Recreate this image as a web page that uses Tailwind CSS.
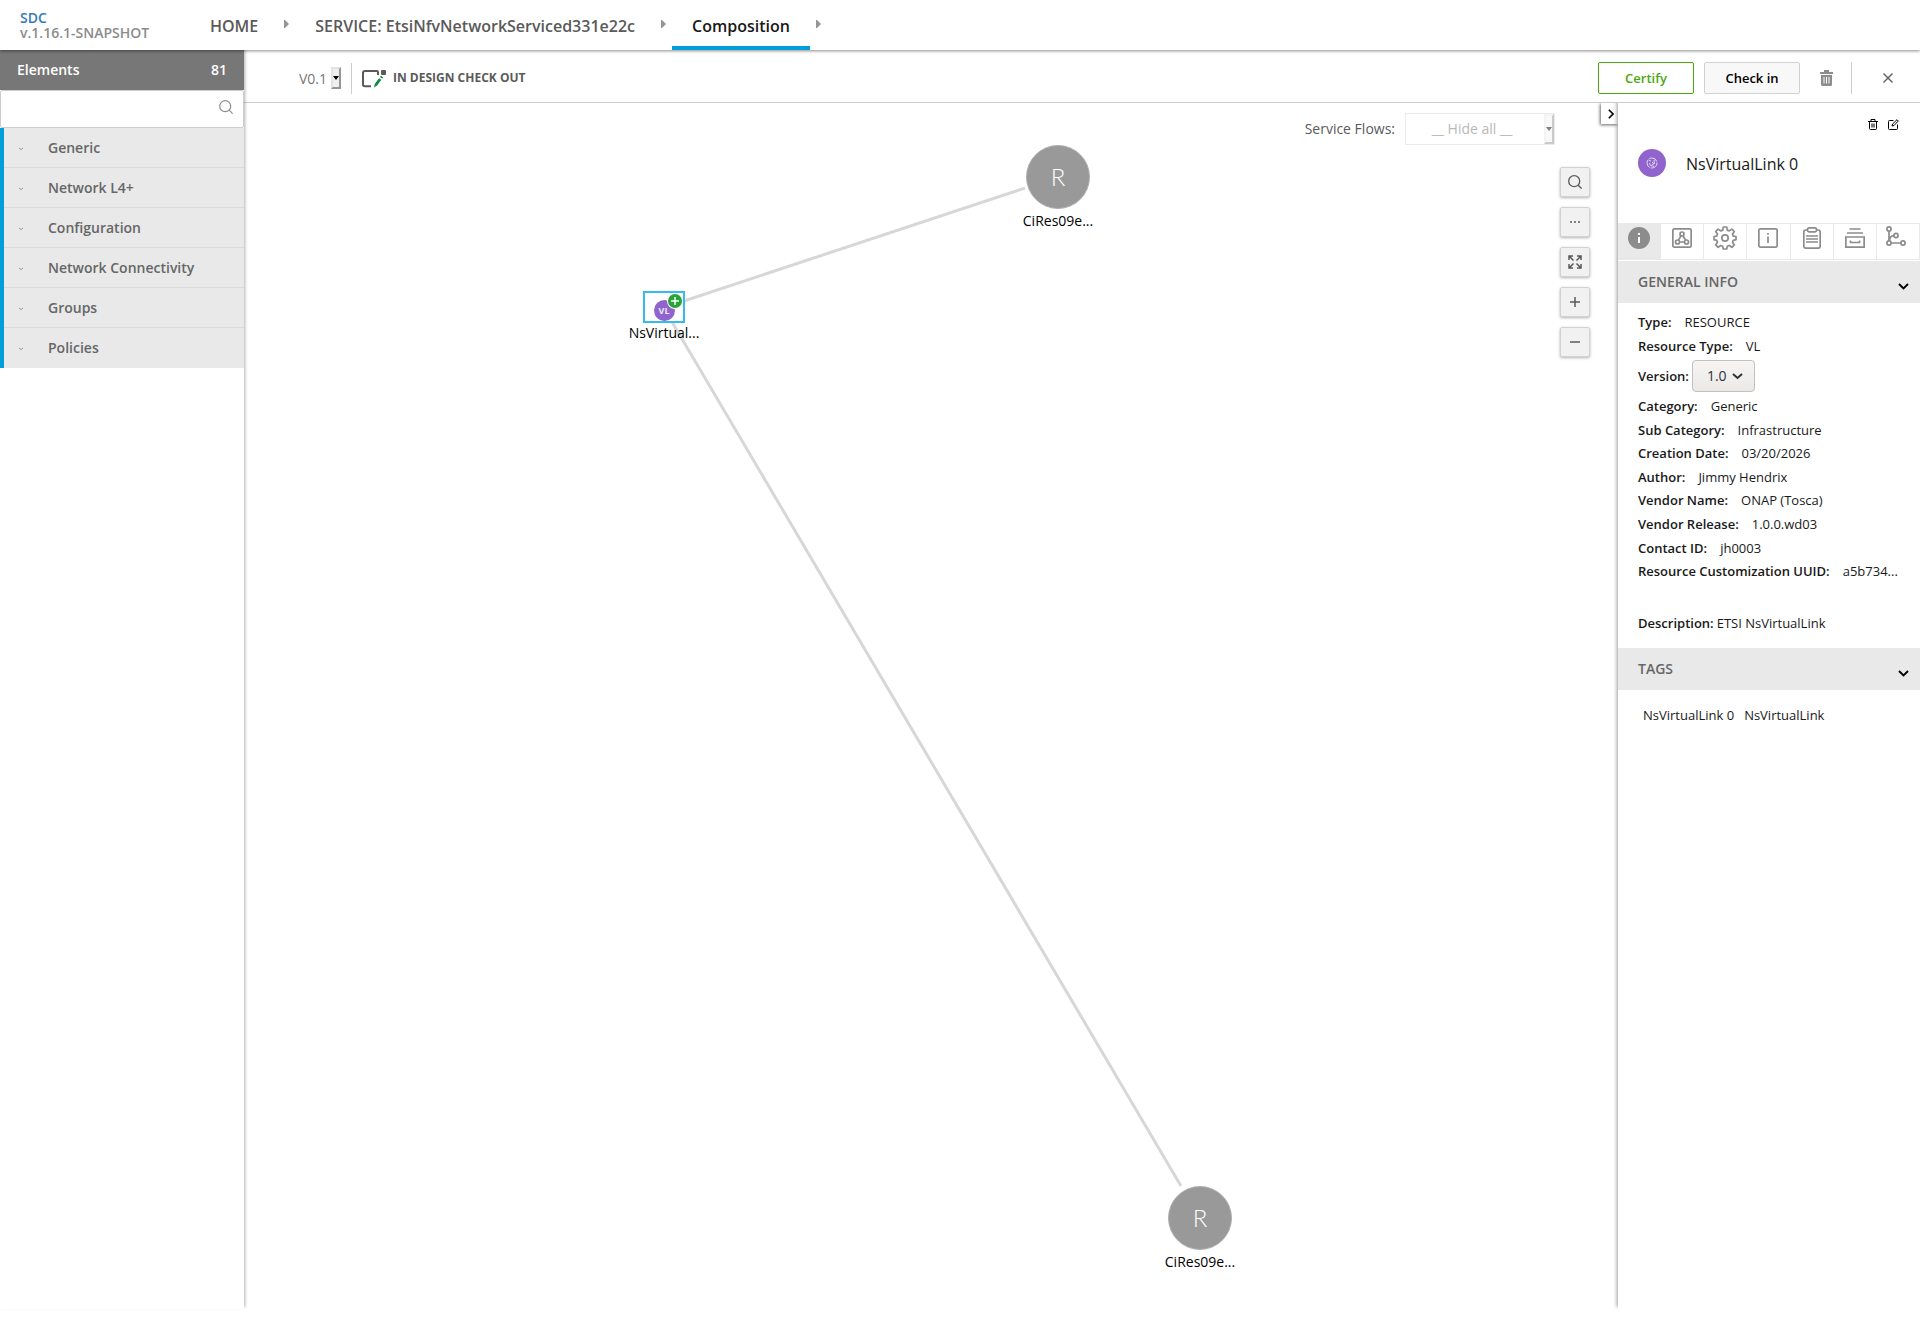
<!DOCTYPE html>
<html lang="en">
<head>
<meta charset="utf-8">
<title>SDC</title>
<script src="https://cdn.jsdelivr.net/npm/@tailwindcss/browser@4"></script>
</head>
<body class="flex min-h-screen flex-col bg-white pb-[10px] font-['Open_Sans',sans-serif] text-[13px] text-[#191919]">

<header class="relative z-20 flex h-[50px] shrink-0 bg-white shadow-[0_1px_3px_rgba(0,0,0,0.45)]">
  <div class="flex w-[190px] flex-col justify-center pl-5 text-[14px] font-semibold leading-[15px]">
    <a href="#" class="text-[#337ab7]">SDC</a>
    <span class="whitespace-nowrap text-[#8c8c8c]">v.1.16.1-SNAPSHOT</span>
  </div>
  <nav class="flex items-stretch whitespace-nowrap text-[16px] font-semibold leading-[52px] text-[#5a5a5a]">
    <a href="#" class="px-5">HOME</a>
    <svg class="mt-5 h-2 w-[17px]" viewBox="0 0 17 8"><path d="M6 0h1l4 4-4 4H6z" fill="#959595"/></svg>
    <a href="#" class="px-5">SERVICE: EtsiNfvNetworkServiced331e22c</a>
    <svg class="mt-5 h-2 w-[17px]" viewBox="0 0 17 8"><path d="M6 0h1l4 4-4 4H6z" fill="#959595"/></svg>
    <a href="#" class="border-b-4 border-[#009fdb] px-5 text-[#191919]">Composition</a>
    <svg class="mt-5 h-2 w-[17px]" viewBox="0 0 17 8"><path d="M6 0h1l4 4-4 4H6z" fill="#959595"/></svg>
  </nav>
</header>

<div class="flex flex-1">
  <!-- Palette -->
  <aside class="relative z-10 w-[244px] shrink-0 bg-white shadow-[1px_-2px_3px_rgba(0,0,0,0.3)]">
    <div class="flex h-10 items-center justify-between bg-[#777] pr-[17px] pb-px pl-[17px] text-[14px] font-semibold text-white"><span>Elements</span><span>81</span></div>
    <div class="relative h-[38px] rounded-xs border border-[#cdcdcd] bg-white">
      <input type="text" aria-label="Search elements" class="h-full w-full px-3 pr-9 outline-none">
      <svg class="absolute top-[9px] right-[10px] size-[14px]" viewBox="0 0 14 14" fill="none" stroke="#8c8c8c" stroke-width="1.2"><circle cx="6.2" cy="6.2" r="5.5"/><path d="M10.2 10.2l3.4 3.4"/></svg>
    </div>
    <ul class="border-l-4 border-[#009fdb] text-[14px] font-semibold text-[#666]">
      <li><button class="flex h-10 w-full items-center border-b border-[#dadada] bg-[#e9e9e9] pl-[15px]"><svg class="mt-[3px] mr-[25px] h-1 w-1" viewBox="0 0 4 4" fill="none" stroke="#999"><path d="M0 1l2 1.6L4 1"/></svg>Generic</button></li>
      <li><button class="flex h-10 w-full items-center border-b border-[#dadada] bg-[#e9e9e9] pl-[15px]"><svg class="mt-[3px] mr-[25px] h-1 w-1" viewBox="0 0 4 4" fill="none" stroke="#999"><path d="M0 1l2 1.6L4 1"/></svg>Network L4+</button></li>
      <li><button class="flex h-10 w-full items-center border-b border-[#dadada] bg-[#e9e9e9] pl-[15px]"><svg class="mt-[3px] mr-[25px] h-1 w-1" viewBox="0 0 4 4" fill="none" stroke="#999"><path d="M0 1l2 1.6L4 1"/></svg>Configuration</button></li>
      <li><button class="flex h-10 w-full items-center border-b border-[#dadada] bg-[#e9e9e9] pl-[15px]"><svg class="mt-[3px] mr-[25px] h-1 w-1" viewBox="0 0 4 4" fill="none" stroke="#999"><path d="M0 1l2 1.6L4 1"/></svg>Network Connectivity</button></li>
      <li><button class="flex h-10 w-full items-center border-b border-[#dadada] bg-[#e9e9e9] pl-[15px]"><svg class="mt-[3px] mr-[25px] h-1 w-1" viewBox="0 0 4 4" fill="none" stroke="#999"><path d="M0 1l2 1.6L4 1"/></svg>Groups</button></li>
      <li><button class="flex h-10 w-full items-center border-b border-[#e9e9e9] bg-[#e9e9e9] pl-[15px]"><svg class="mt-[3px] mr-[25px] h-1 w-1" viewBox="0 0 4 4" fill="none" stroke="#999"><path d="M0 1l2 1.6L4 1"/></svg>Policies</button></li>
    </ul>
  </aside>

  <div class="flex min-w-0 flex-1 flex-col">
    <!-- Workspace bar -->
    <div class="flex h-[53px] shrink-0 items-center border-b border-[#cdcdcd] pt-[4px] pl-[55px] pr-[27px]">
      <label class="relative flex h-8 w-[42px] items-center">
        <select aria-label="Version" class="w-full appearance-none bg-transparent text-[14px] text-[#777] outline-none"><option>V0.1</option></select>
        <span class="pointer-events-none absolute top-[5px] right-0 flex h-[22px] w-[10px] items-center justify-center border-2 border-t-[#e3e3e3] border-r-[#969696] border-b-[#969696] border-l-[#e3e3e3] bg-[#efefef]"><svg class="h-1 w-[6px] shrink-0" viewBox="0 0 6 4"><path d="M0 0h6L3 4z" fill="#000"/></svg></span>
      </label>
      <span class="ml-[10px] h-[31px] w-px bg-[#cdcdcd]"></span>
      <svg class="ml-[10px] mt-[2px] h-[18px] w-6" viewBox="0 0 24 18" fill="none"><path d="M16 5V2.200Q16 1 15 1H3Q1 1 1 3V14.500Q1 16.300 3 16.300H9" stroke="#5a5a5a" stroke-width="2"/><rect x="19" y="0" width="5" height="5" rx="1" fill="#5a5a5a"/><path d="M12 17.500l.8-3.500 4.200-5.800 2.300 1.600-4.200 5.800zM18 7l.9-1.200 2.300 1.600-.9 1.200z" fill="#0a8a43"/></svg>
      <span class="ml-[7px] text-[12px] font-bold text-[#5a5a5a]">IN DESIGN CHECK OUT</span>
      <div class="ml-auto flex items-center">
        <button class="h-8 w-24 rounded-xs border border-[#4ca90c] bg-white pt-px text-[13px] font-semibold text-[#4ca90c]">Certify</button>
        <button class="ml-[10px] h-8 w-24 rounded-xs border border-[#d2d2d2] bg-[#f8f8f8] pt-px text-[13px] font-semibold text-black">Check in</button>
        <button aria-label="Delete" class="ml-5"><svg class="h-4 w-[13px]" viewBox="0 0 13 16"><path d="M4 0h5v2h4v2H0V2h4zM1 5h11v9.500q0 1.500-1.500 1.500h-8Q1 16 1 14.500z" fill="#8c8c8c"/><path d="M4 7v6.500M6.500 7v6.500M9 7v6.500" stroke="#fff"/></svg></button>
        <span class="ml-[18px] h-8 w-px bg-[#cdcdcd]"></span>
        <button aria-label="Close" class="ml-[31px]"><svg class="size-[10px]" viewBox="0 0 10 10" stroke="#5a5a5a" stroke-width="1.400"><path d="M.5.5l9 9M9.500.5l-9 9"/></svg></button>
      </div>
    </div>

    <div class="flex flex-1">
      <!-- Composition canvas -->
      <main class="relative min-w-0 flex-1 overflow-hidden">
        <svg class="absolute top-0 left-0 h-[1100px] w-[1000px]" stroke="#d7d7d7" stroke-width="3"><path d="M440 198L781 85M428 219L937 1083"/></svg>

        <div class="absolute top-[42px] left-[774px] flex w-20 flex-col items-center">
          <div class="flex size-16 items-center justify-center rounded-full border border-[#b0b0b0] bg-[#999] font-['Lato',sans-serif] text-[24px] font-light text-white">R</div>
          <span class="text-[14px] leading-[24px] text-black">CiRes09e...</span>
        </div>
        <div class="absolute top-[1083px] left-[916px] flex w-20 flex-col items-center">
          <div class="flex size-16 items-center justify-center rounded-full border border-[#b0b0b0] bg-[#999] font-['Lato',sans-serif] text-[24px] font-light text-white">R</div>
          <span class="text-[14px] leading-[24px] text-black">CiRes09e...</span>
        </div>
        <div class="absolute top-[188px] left-[380px] flex w-20 flex-col items-center">
          <div class="relative flex h-8 w-[42px] items-end justify-center border-2 border-[#33bdee] bg-white">
            <div class="flex size-[21px] items-center justify-center rounded-full bg-[#9063cd] text-[9px] font-bold text-white/85">VL</div>
            <svg class="absolute top-0 right-0 size-4" viewBox="0 0 16 16"><circle cx="8" cy="8" r="8" fill="#fff"/><circle cx="8" cy="8" r="7" fill="#27a337"/><path d="M8 4v8M4 8h8" stroke="#fff" stroke-width="1.500"/></svg>
          </div>
          <span class="text-[14px] leading-[20px] text-black">NsVirtual...</span>
        </div>

        <div class="absolute top-[10px] right-[63px] flex items-center text-[14px] text-[#5a5a5a]">
          <label for="flows" class="pb-px">Service Flows:</label>
          <div class="relative ml-[10px] h-8 w-[150px] border border-[#eaeaea]">
            <select id="flows" class="h-full w-full appearance-none bg-transparent pr-4 pb-px text-center text-[#b9b9b9] outline-none [text-align-last:center]"><option>__ Hide all __</option></select>
            <span class="pointer-events-none absolute top-0 right-0 flex h-[30px] w-[10px] items-center justify-center border-2 border-t-[#f3f3f3] border-r-[#cacaca] border-b-[#cacaca] border-l-[#f3f3f3] bg-[#f8f8f8]"><svg class="h-1 w-[6px] shrink-0" viewBox="0 0 6 4"><path d="M0 0h6L3 4z" fill="#808080"/></svg></span>
          </div>
        </div>

        <div class="absolute top-16 right-[28px] flex flex-col gap-[10px]">
          <button aria-label="Search" class="flex size-[30px] items-center justify-center rounded-xs border border-[#d2d2d2] bg-[#f1f1f1] shadow-[0_1px_3px_rgba(0,0,0,0.3)]"><svg class="size-[14px]" viewBox="0 0 14 14" fill="none" stroke="#5a5a5a" stroke-width="1.300"><circle cx="6.200" cy="6.200" r="5.500"/><path d="M10.200 10.200l3.400 3.400"/></svg></button>
          <button aria-label="More" class="flex size-[30px] items-center justify-center rounded-xs border border-[#d2d2d2] bg-[#f1f1f1] shadow-[0_1px_3px_rgba(0,0,0,0.3)]"><svg class="h-[2px] w-[10px]" viewBox="0 0 10 2" fill="#5a5a5a"><circle cx="1" cy="1" r="1"/><circle cx="5" cy="1" r="1"/><circle cx="9" cy="1" r="1"/></svg></button>
          <button aria-label="Fit" class="flex size-[30px] items-center justify-center rounded-xs border border-[#d2d2d2] bg-[#f1f1f1] shadow-[0_1px_3px_rgba(0,0,0,0.3)]"><svg class="size-[14px]" viewBox="0 0 14 14" fill="none" stroke="#5a5a5a" stroke-width="1.500"><path d="M1 5V1h4M1 1l4.500 4.500M9 1h4v4M13 1L8.500 5.500M1 9v4h4M1 13l4.500-4.500M9 13h4V9M13 13L8.500 8.500"/></svg></button>
          <button aria-label="Zoom in" class="flex size-[30px] items-center justify-center rounded-xs border border-[#d2d2d2] bg-[#f1f1f1] shadow-[0_1px_3px_rgba(0,0,0,0.3)]"><svg class="size-[10px]" viewBox="0 0 10 10" stroke="#5a5a5a" stroke-width="1.500"><path d="M5 0v10M0 5h10"/></svg></button>
          <button aria-label="Zoom out" class="flex size-[30px] items-center justify-center rounded-xs border border-[#d2d2d2] bg-[#f1f1f1] shadow-[0_1px_3px_rgba(0,0,0,0.3)]"><svg class="size-[10px]" viewBox="0 0 10 10" stroke="#5a5a5a" stroke-width="1.500"><path d="M0 5h10"/></svg></button>
        </div>

        <button aria-label="Collapse panel" class="absolute top-0 right-0 flex h-[21px] w-[17px] items-center justify-center bg-white pl-[2px] shadow-[-1px_1px_3px_rgba(0,0,0,0.6)]"><svg class="h-[10px] w-[6px]" viewBox="0 0 6 10" fill="none" stroke="#000" stroke-width="1.600"><path d="M.8.8L5 5 .8 9.200"/></svg></button>
      </main>

      <!-- Details panel -->
      <aside class="relative w-[302px] shrink-0 bg-white shadow-[-1px_-2px_4px_rgba(0,0,0,0.4)] [clip-path:inset(0_0_0_-8px)]">
        <div class="h-[120px]">
          <div class="flex justify-end gap-[10px] pt-4 pr-[21px]">
            <button aria-label="Delete instance"><svg class="h-[11px] w-[10px]" viewBox="0 0 10 11" fill="none" stroke="#000"><path d="M0 2.500h10M3 2V.5h4V2M1.500 2.500V9.500q0 1 1 1h5q1 0 1-1V2.500"/><path d="M3 4.500h4v4H3z" fill="#777" stroke="none"/></svg></button>
            <button aria-label="Edit instance"><svg class="size-[11px]" viewBox="0 0 11 11" fill="none" stroke="#000"><path d="M5.500 1.500H1.500q-1 0-1 1v7q0 1 1 1h7q1 0 1-1V5.500M4 7l.5-2L9 .7 10.300 2 6 6.500z"/></svg></button>
          </div>
          <div class="mt-[19px] flex items-center pl-5">
            <svg class="size-7" viewBox="0 0 28 28" fill="none"><circle cx="14" cy="14" r="14" fill="#9063cd"/><g stroke="#fff" stroke-width=".9" opacity=".85"><circle cx="14" cy="14" r="5" stroke-dasharray="9 1"/><path d="M11 11.500l2 .5M16 11l.5 3.500-2.500 1M11.500 14l1 2.500 3.500.8M14 13l1.500 1.500"/></g></svg>
            <h1 class="ml-5 pt-[2px] text-[16px]">NsVirtualLink 0</h1>
          </div>
        </div>

        <div role="tablist" class="grid h-[37px] grid-cols-7 border-y border-[#e9e9e9]">
          <button role="tab" aria-label="General" class="flex justify-center border-r border-[#e9e9e9] bg-[#e9e9e9] pt-[3px]"><svg class="size-[22px]" viewBox="0 0 22 22"><circle cx="11" cy="11" r="11" fill="#8c8c8c"/><path d="M10 10h2v6h-2zM10 6h2v2h-2z" fill="#fff"/></svg></button>
          <button role="tab" aria-label="Composition" class="flex justify-center border-r border-[#e9e9e9] pt-1"><svg class="size-5" viewBox="0 0 20 20" fill="none" stroke="#8c8c8c" stroke-width="1.700"><rect x=".85" y=".85" width="18.300" height="18.300" rx="1.500"/><circle cx="10" cy="6" r="2"/><circle cx="5.500" cy="14" r="2"/><circle cx="14.500" cy="14" r="2"/><path d="M9 8l-2.500 4M11 8l2.500 4M7.500 14h5"/></svg></button>
          <button role="tab" aria-label="Inputs" class="flex justify-center border-r border-[#e9e9e9] pt-[2px]"><svg class="size-6" viewBox="0 0 24 24" fill="none" stroke="#8c8c8c" stroke-width="1.700" stroke-linejoin="round"><circle cx="12" cy="12" r="3.200"/><path d="M10.300 1h3.400l.6 3.100 2 .8 2.600-1.800 2.400 2.400-1.800 2.600.8 2 2.700.4v3.200l-2.700.6-.8 2 1.800 2.600-2.400 2.400-2.600-1.800-2 .8-.6 2.700h-3.400l-.6-2.700-2-.8-2.600 1.800-2.400-2.400 1.800-2.600-.8-2L1 13.700v-3.200l2.700-.4.8-2-1.800-2.600 2.400-2.400 2.600 1.800 2-.8z"/></svg></button>
          <button role="tab" aria-label="Properties" class="flex justify-center border-r border-[#e9e9e9] pt-1"><svg class="size-5" viewBox="0 0 20 20" fill="none" stroke="#8c8c8c" stroke-width="1.700"><rect x=".85" y=".85" width="18.300" height="18.300" rx="1.500"/><path d="M10 8.500V15M10 5v1.700"/></svg></button>
          <button role="tab" aria-label="Requirements" class="flex justify-center border-r border-[#e9e9e9] pt-[3px]"><svg class="h-[22px] w-[18px]" viewBox="0 0 18 22" fill="none" stroke="#8c8c8c" stroke-width="1.700"><path d="M4.500 3H3Q.8 3 .8 5v14q0 2.200 2.200 2.200h12q2.200 0 2.200-2.200V5q0-2-2.200-2h-1.500"/><rect x="4.500" y=".85" width="9" height="4" rx="1.500"/><path d="M3 9h12M3 12h12M3 15h12"/></svg></button>
          <button role="tab" aria-label="Artifacts" class="flex justify-center border-r border-[#e9e9e9] pt-1"><svg class="size-5" viewBox="0 0 20 20" fill="none" stroke="#8c8c8c" stroke-width="1.700"><path d="M4.500 1h11M2 5h16M.85 9h18.300v10.150H.85zM5.500 12.500v2h9v-2"/></svg></button>
          <button role="tab" aria-label="Dependencies" class="flex justify-center border-r border-[#e9e9e9] pt-[2px] pr-1"><svg class="size-5" viewBox="0 0 20 20" fill="none" stroke="#8c8c8c" stroke-width="1.700"><circle cx="3" cy="3" r="2.100"/><circle cx="3" cy="17" r="2.100"/><circle cx="17" cy="17" r="2.100"/><circle cx="10" cy="9.500" r="2.100"/><path d="M3 5.200v9.600M5.200 17h9.600M3.500 15q0-5 4.300-5.300"/></svg></button>
        </div>

        <section>
          <h2><button class="mt-px flex h-[42px] w-full items-center justify-between bg-[#e9e9e9] pr-[11px] pb-px pl-5 text-[14px] font-semibold text-[#666]">GENERAL INFO<svg class="mt-[10px] h-[7px] w-[11px]" viewBox="0 0 11 7" fill="none" stroke="#000" stroke-width="1.800"><path d="M1 1l4.500 4.500L10 1"/></svg></button></h2>
          <dl class="pt-[5px] pl-5 leading-[1.43] [&_dt]:font-semibold">
            <div class="flex gap-[13px] pt-[5px]"><dt>Type:</dt><dd>RESOURCE</dd></div>
            <div class="flex gap-[13px] pt-[5px]"><dt>Resource Type:</dt><dd>VL</dd></div>
            <div class="flex items-center gap-[3px] pt-[5px]">
              <dt><label for="ver">Version:</label></dt>
              <dd class="relative"><select id="ver" class="block h-8 w-[63px] appearance-none rounded-[4px] border border-[#c3bfbb] bg-linear-to-b from-[#f6f5f4] to-[#eae9e8] pl-[14px] text-[14px] text-[#2e3436]"><option>1.0</option></select><svg class="pointer-events-none absolute top-[13px] right-[12px] h-[7px] w-[11px]" viewBox="0 0 11 7" fill="none" stroke="#2e3436" stroke-width="2"><path d="M1 1l4.500 4L10 1"/></svg></dd>
            </div>
            <div class="flex gap-[13px] pt-[5px]"><dt>Category:</dt><dd>Generic</dd></div>
            <div class="flex gap-[13px] pt-[5px]"><dt>Sub Category:</dt><dd>Infrastructure</dd></div>
            <div class="flex gap-[13px] pt-[5px]"><dt>Creation Date:</dt><dd>03/20/2026</dd></div>
            <div class="flex gap-[13px] pt-[5px]"><dt>Author:</dt><dd>Jimmy Hendrix</dd></div>
            <div class="flex gap-[13px] pt-[5px]"><dt>Vendor Name:</dt><dd>ONAP (Tosca)</dd></div>
            <div class="flex gap-[13px] pt-[5px]"><dt>Vendor Release:</dt><dd>1.0.0.wd03</dd></div>
            <div class="flex gap-[13px] pt-[5px]"><dt>Contact ID:</dt><dd>jh0003</dd></div>
            <div class="flex gap-[13px] pt-[5px]"><dt>Resource Customization UUID:</dt><dd>a5b734...</dd></div>
            <div class="flex gap-[3px] pt-[33px] pb-4"><dt>Description:</dt><dd>ETSI NsVirtualLink</dd></div>
          </dl>
        </section>
        <section>
          <h2><button class="flex h-[42px] w-full items-center justify-between bg-[#e9e9e9] pr-[11px] pb-px pl-5 text-[14px] font-semibold text-[#666]">TAGS<svg class="mt-[10px] h-[7px] w-[11px]" viewBox="0 0 11 7" fill="none" stroke="#000" stroke-width="1.800"><path d="M1 1l4.500 4.500L10 1"/></svg></button></h2>
          <ul class="flex gap-[10px] pt-4 pl-[25px] leading-[19px]"><li>NsVirtualLink 0</li><li>NsVirtualLink</li></ul>
        </section>
      </aside>
    </div>
  </div>
</div>
</body>
</html>
